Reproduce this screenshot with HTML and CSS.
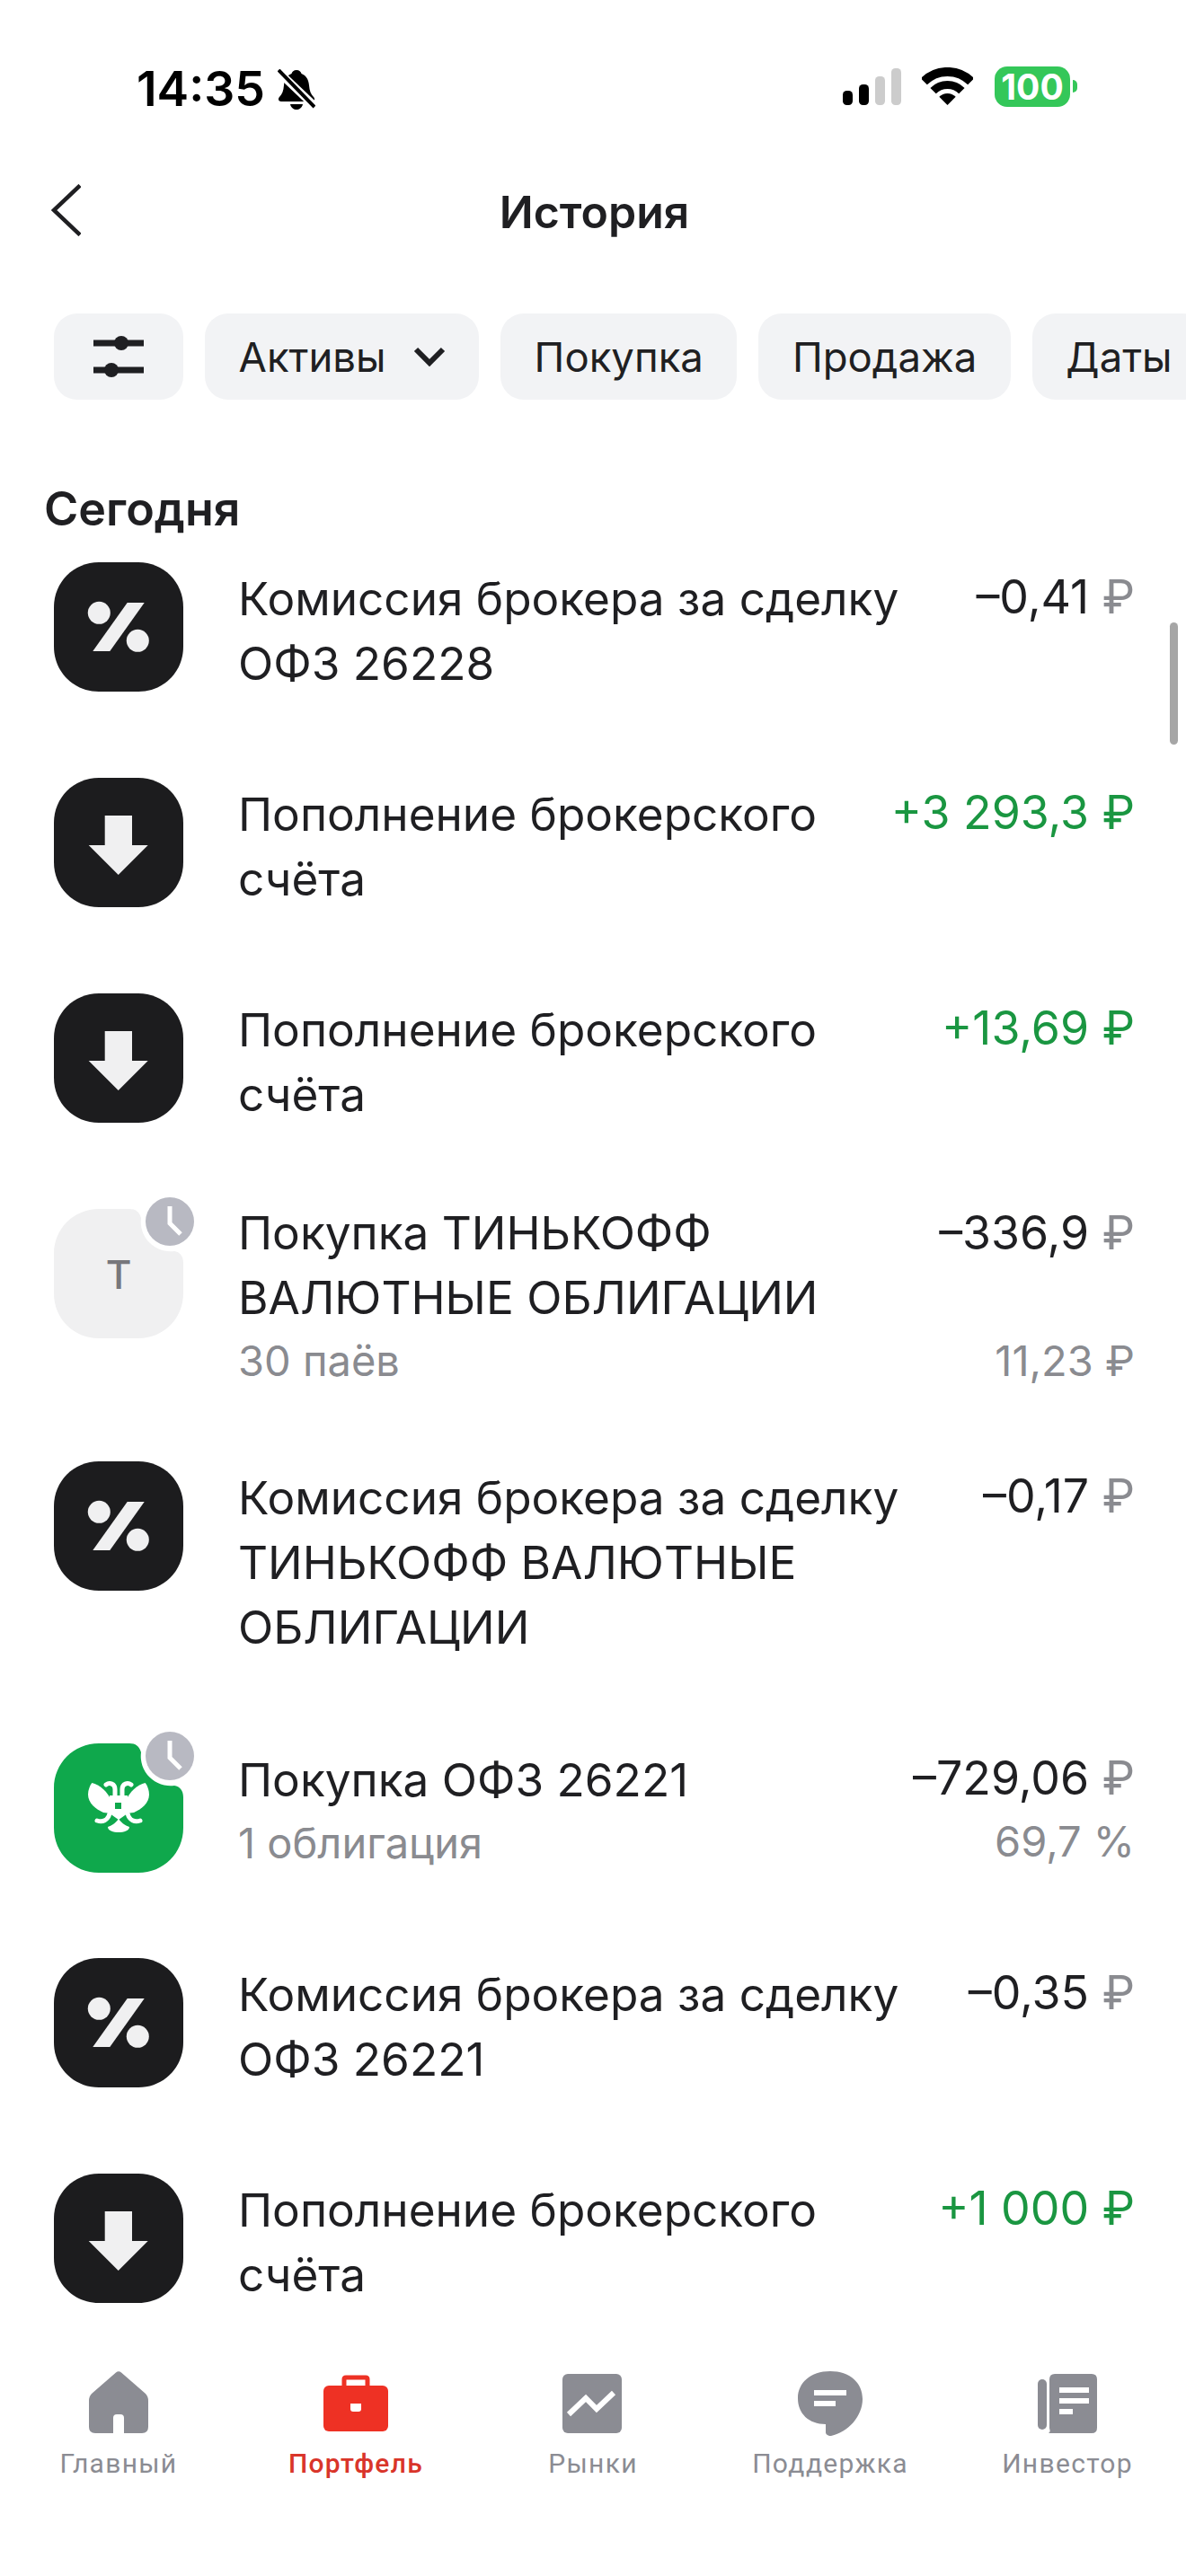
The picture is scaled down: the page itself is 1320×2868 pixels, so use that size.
FILE: index.html
```html
<!DOCTYPE html>
<html lang="ru"><head>
  <meta charset="utf-8">
  <title>История</title>
  <link rel="stylesheet" href="styles.css">
</head>
<body>

<svg class="defs" width="0" height="0">
  <defs>
    <path id="tile" d="M50 0H94C122 0 144 22 144 50V94C144 122 122 144 94 144H50C22 144 0 122 0 94V50C0 22 22 0 50 0Z"/>
    <path id="tile-notch" d="M50 0H84C91 0 95 3 97 10A33 33 0 0 0 134 47C140 48 144 52 144 60V94C144 122 122 144 94 144H50C22 144 0 122 0 94V50C0 22 22 0 50 0Z"/>
    <g id="percent">
      <use href="#tile" fill="#1c1c1e"/>
      <circle cx="50.3" cy="56.3" r="12.5" fill="#f0f0f1"/>
      <circle cx="93.3" cy="87.3" r="12.5" fill="#f0f0f1"/>
      <path d="M81.7 45H100.7L62.3 99H43.3Z" fill="#f0f0f1"/>
    </g>
    <g id="arrow">
      <use href="#tile" fill="#1c1c1e"/>
      <path d="M56.7 42H87V75H104.7L71.7 108L38.7 75H56.7Z" fill="#f0f0f1"/>
    </g>
    <g id="clock">
      <circle cx="129" cy="14" r="27" fill="#b8b9c2"/>
      <path d="M129 -3V16L141 28" fill="none" stroke="#fff" stroke-width="5"/>
    </g>
  </defs>
</svg>

<div class="page">

  <div class="status">
    <div class="status-left">
      <span class="time">14:35</span>
      <svg class="bell" width="42" height="45" viewBox="0 0 42 45">
        <path d="M21 1C24 1 26 3 26.500 5C32 7 34.500 12 35 18C35.500 24 37 28 40 31C42 33 41 36 38 36H4C1 36 0 33 2 31C5 28 6.500 24 7 18C7.500 12 10 7 15.500 5C16 3 18 1 21 1Z"/>
        <path d="M14 39H28C27 43 24 45 21 45C18 45 15 43 14 39Z"/>
        <path d="M0 2L42 42" stroke="#fff" stroke-width="9"/>
        <path d="M1 1L41 42" stroke="#000" stroke-width="4"/>
      </svg>
    </div>
    <div class="status-right">
      <svg class="signal" width="65" height="41" viewBox="0 0 65 41">
        <rect x="0" y="25" width="11" height="16" rx="4.500"/>
        <rect x="18" y="18" width="11" height="23" rx="4.500"/>
        <rect x="36" y="9" width="11" height="32" rx="4.500" fill="#cccccc"/>
        <rect x="54" y="0" width="11" height="41" rx="4.500" fill="#cccccc"/>
      </svg>
      <svg class="wifi" width="57" height="42" viewBox="0 0 57 42">
        <path d="M2.300 15.800A37 37 0 0 1 54.700 15.800" fill="none" stroke="#000" stroke-width="10"/>
        <path d="M12.600 26.100A22.500 22.500 0 0 1 44.400 26.100" fill="none" stroke="#000" stroke-width="9"/>
        <path d="M28.500 42L19.300 32.800A13 13 0 0 1 37.700 32.800Z"/>
      </svg>
      <div class="battery">100</div>
    </div>
  </div>

  <div class="topbar">
    <svg class="back" width="33" height="58" viewBox="0 0 33 58">
      <path d="M32 1.500L3 29L32 56.500" fill="none" stroke="#1f1f22" stroke-width="4.500"/>
    </svg>
    <h1 class="title">История</h1>
  </div>

  <div class="chips">
    <div class="chip chip-icon">
      <svg width="56" height="48" viewBox="0 0 56 48">
        <path d="M0 9H56M0 39H56" stroke="#1f1f22" stroke-width="7"/>
        <circle cx="31" cy="9" r="8" fill="#1f1f22"/>
        <circle cx="20" cy="39" r="8" fill="#1f1f22"/>
      </svg>
    </div>
    <div class="chip chip-select">Активы
      <svg width="36" height="22" viewBox="0 0 36 22">
        <path d="M3 3L18 18L33 3" fill="none" stroke="#1f1f22" stroke-width="6"/>
      </svg>
    </div>
    <div class="chip">Покупка</div>
    <div class="chip">Продажа</div>
    <div class="chip">Даты</div>
  </div>

  <h2 class="day">Сегодня</h2>

  <div class="list">

    <div class="row">
      <svg class="tile" width="144" height="144" viewBox="0 0 144 144"><use href="#percent"/></svg>
      <div class="text">Комиссия брокера за сделку<br>ОФЗ 26228</div>
      <div class="sum"><div>–0,41 <span class="rub">₽</span></div></div>
    </div>

    <div class="row">
      <svg class="tile" width="144" height="144" viewBox="0 0 144 144"><use href="#arrow"/></svg>
      <div class="text">Пополнение брокерского<br>счёта</div>
      <div class="sum plus"><div>+3 293,3 ₽</div></div>
    </div>

    <div class="row">
      <svg class="tile" width="144" height="144" viewBox="0 0 144 144"><use href="#arrow"/></svg>
      <div class="text">Пополнение брокерского<br>счёта</div>
      <div class="sum plus"><div>+13,69 ₽</div></div>
    </div>

    <div class="row row-fund">
      <svg class="tile" width="144" height="144" viewBox="0 0 144 144">
        <use href="#tile-notch" fill="#f0f0f1"/>
        <text class="tile-letter" x="72" y="89" text-anchor="middle">Т</text>
        <use href="#clock"/>
      </svg>
      <div class="text">Покупка ТИНЬКОФФ<br>ВАЛЮТНЫЕ ОБЛИГАЦИИ<div class="sub">30 паёв</div></div>
      <div class="sum"><div>–336,9 <span class="rub">₽</span></div><div class="sub sub-low">11,23 ₽</div></div>
    </div>

    <div class="row row-long">
      <svg class="tile" width="144" height="144" viewBox="0 0 144 144"><use href="#percent"/></svg>
      <div class="text">Комиссия брокера за сделку<br>ТИНЬКОФФ ВАЛЮТНЫЕ<br>ОБЛИГАЦИИ</div>
      <div class="sum"><div>–0,17 <span class="rub">₽</span></div></div>
    </div>

    <div class="row row-ofz">
      <svg class="tile" width="144" height="144" viewBox="0 0 144 144">
        <use href="#tile-notch" fill="#0fa84c"/>
        <g fill="#fff">
          <path d="M42.300 44C51 46 60 54 64 64L64 78L55 77C46 73 38 66 38 57C38 52 40 47 42.300 44Z"/>
          <path d="M101.700 44C93 46 84 54 80 64L80 78L89 77C98 73 106 66 106 57C106 52 104 47 101.700 44Z"/>
          <path d="M62 58H82V78L72 85L62 78Z"/>
          <path d="M60 93C66 91 69 88 72 84C75 88 78 91 84 93C84 97 78 99 72 99C66 99 60 97 60 93Z"/>
        </g>
        <g fill="none" stroke="#fff" stroke-width="5" stroke-linecap="round">
          <path d="M48 86C54 88 60 86 62 78"/>
          <path d="M96 86C90 88 84 86 82 78"/>
          <path d="M58 46C62 43 68 45 68 51V60"/>
          <path d="M86 46C82 43 76 45 76 51V60"/>
        </g>
        <rect x="68" y="66" width="7" height="7" fill="#0fa84c"/>
        <use href="#clock"/>
      </svg>
      <div class="text">Покупка ОФЗ 26221<div class="sub">1 облигация</div></div>
      <div class="sum"><div>–729,06 <span class="rub">₽</span></div><div class="sub">69,7 %</div></div>
    </div>

    <div class="row">
      <svg class="tile" width="144" height="144" viewBox="0 0 144 144"><use href="#percent"/></svg>
      <div class="text">Комиссия брокера за сделку<br>ОФЗ 26221</div>
      <div class="sum"><div>–0,35 <span class="rub">₽</span></div></div>
    </div>

    <div class="row row-last">
      <svg class="tile" width="144" height="144" viewBox="0 0 144 144"><use href="#arrow"/></svg>
      <div class="text">Пополнение брокерского<br>счёта</div>
      <div class="sum plus"><div>+1 000 ₽</div></div>
    </div>

  </div>

  <div class="scrollbar"></div>

  <div class="nav">
    <div class="nav-item">
      <svg width="80" height="72" viewBox="0 0 80 72">
        <path d="M37 1.500Q40 -1 43 1.500L70 25Q73 28 73 33V62Q73 69 66 69H46V52Q46 48 42 48H38Q34 48 34 52V69H14Q7 69 7 62V33Q7 28 10 25Z" fill="#8b8c93"/>
      </svg>
      Главный
    </div>
    <div class="nav-item active">
      <svg width="80" height="72" viewBox="0 0 80 72">
        <path d="M27 16V9Q27 7 29 7H51Q53 7 53 9V16" fill="none" stroke="#ee3124" stroke-width="5"/>
        <rect x="4" y="16" width="72" height="51" rx="6" fill="#ee3124"/>
        <path d="M34 36H46V42Q46 45 43 45H37Q34 45 34 42Z" fill="#fff"/>
      </svg>
      Портфель
    </div>
    <div class="nav-item">
      <svg width="80" height="72" viewBox="0 0 80 72">
        <rect x="6" y="3" width="66" height="66" rx="6" fill="#8b8c93"/>
        <path d="M13 48L32 30L44 42L63 24" fill="none" stroke="#fff" stroke-width="6"/>
      </svg>
      Рынки
    </div>
    <div class="nav-item">
      <svg width="80" height="72" viewBox="0 0 80 72">
        <path d="M40 0C62 0 76 13 76 31C76 50 60 68 41 72C37 72 35 70 35 68V59C16 59 4 47 4 30C4 13 18 0 40 0Z" fill="#8b8c93"/>
        <path d="M22 21H58V27H22ZM22 33H46V39H22Z" fill="#fff"/>
      </svg>
      Поддержка
    </div>
    <div class="nav-item">
      <svg width="80" height="72" viewBox="0 0 80 72">
        <rect x="7" y="9" width="10" height="56" rx="5" fill="#8b8c93"/>
        <path d="M26 3H67Q73 3 73 9V63Q73 69 67 69H19C22 67 20 65 20 63V9Q20 3 26 3Z" fill="#8b8c93"/>
        <path d="M31 18H64V24H31ZM31 30H64V36H31ZM31 42H46V48H31Z" fill="#fff"/>
      </svg>
      Инвестор
    </div>
  </div>

</div>

</body></html>
```

FILE: styles.css
```css
body,html { margin:0; padding:0; background:white; color:#1f1f22; font-family:Inter,"Liberation Sans",sans-serif; }

.defs { position:absolute; }

.page {
  position: relative;
  width: 1320px;
  height: 2868px;
  overflow: hidden;
  background: white;
}

/* status bar */
.status {
  height: 150px;
  padding: 46px 129px 0 152px;
  box-sizing: border-box;
  display: flex;
  justify-content: space-between;
  align-items: flex-start;
}
.status-left {
  display: flex;
  align-items: center;
  gap: 14px;
  height: 50px;
  margin-top: 28px;
}
.time {
  font-size: 53.5px;
  font-weight: 600;
  line-height: 50px;
  color: #000;
}
.status-right {
  display: flex;
  align-items: flex-end;
  height: 71px;
}
.signal { margin-right: 23px; }
.wifi { margin-right: 24px; }
.battery {
  position: relative;
  width: 84px;
  height: 45px;
  margin-bottom: -2px;
  border-radius: 14px;
  background: #34c759;
  color: white;
  font-size: 39px;
  font-weight: 700;
  line-height: 45px;
  text-align: center;
}
.battery::after {
  content: "";
  position: absolute;
  left: 87px;
  top: 15px;
  width: 5px;
  height: 14px;
  border-radius: 0 7px 7px 0;
  background: #34c759;
}

/* title */
.topbar {
  height: 172px;
  padding-left: 3px;
  display: flex;
  align-items: center;
  justify-content: center;
  position: relative;
}
.back {
  position: absolute;
  left: 57px;
  top: 55px;
}
.title {
  margin: 0;
  font-size: 50px;
  font-weight: 600;
  line-height: 60px;
}

/* filters */
.chips {
  margin-top: 27px;
  padding-left: 60px;
  display: flex;
  gap: 24px;
}
.chip {
  flex: none;
  height: 96px;
  padding: 0 37.5px;
  box-sizing: border-box;
  display: flex;
  align-items: center;
  gap: 30px;
  border-radius: 26px;
  background: #f2f3f5;
  font-size: 45.5px;
}
.chip-icon { width: 144px; padding: 0; justify-content: center; }

.day {
  margin: 92px 0 0 49px;
  font-size: 52px;
  font-weight: 600;
  line-height: 60px;
}

/* history */
.list { margin-top: 29px; }
.row {
  height: 240px;
  padding: 0 57px 0 60px;
  display: flex;
  align-items: flex-start;
}
.row-fund { height: 281px; }
.row-long { height: 314px; }
.row-ofz { height: 239px; }
.row-last { height: 180px; }
.tile { flex: none; overflow: visible; margin-right: 61px; }
.tile-letter { font-size: 44px; font-weight: 500; fill: #77777c; }
.text {
  margin-top: 4px;
  font-size: 51.3px;
  line-height: 72px;
  white-space: nowrap;
}
.row-fund .text { margin-top: -10px; }
.row-fund .sum { margin-top: -10px; }
.sum {
  margin: 2px 0 0 auto;
  font-size: 51.8px;
  line-height: 72px;
  text-align: right;
  white-space: nowrap;
}
.plus { color: #1a9641; }
.rub { color: #8a8b90; }
.sub {
  color: #8a8b90;
  font-size: 47px;
  line-height: 70px;
}
.sum .sub { margin-top: 0; }
.sum .sub-low { margin-top: 72px; }

.scrollbar {
  position: absolute;
  left: 1302px;
  top: 693px;
  width: 9px;
  height: 136px;
  border-radius: 5px;
  background: #a6a6a6;
}

/* tab bar */
.nav {
  position: absolute;
  left: 0;
  right: 0;
  bottom: 0;
  height: 268px;
  padding-top: 40px;
  box-sizing: border-box;
  display: grid;
  grid-template-columns: repeat(5, 264px);
  background: white;
}
.nav-item {
  display: flex;
  flex-direction: column;
  align-items: center;
  color: #8b8c93;
  font-family: Roboto,"Liberation Sans",sans-serif;
  font-size: 30px;
  letter-spacing: 1.3px;
  line-height: 40px;
}
.nav-item svg { margin-bottom: 11px; }
.active { color: #d9352a; font-weight: 500; }
```
